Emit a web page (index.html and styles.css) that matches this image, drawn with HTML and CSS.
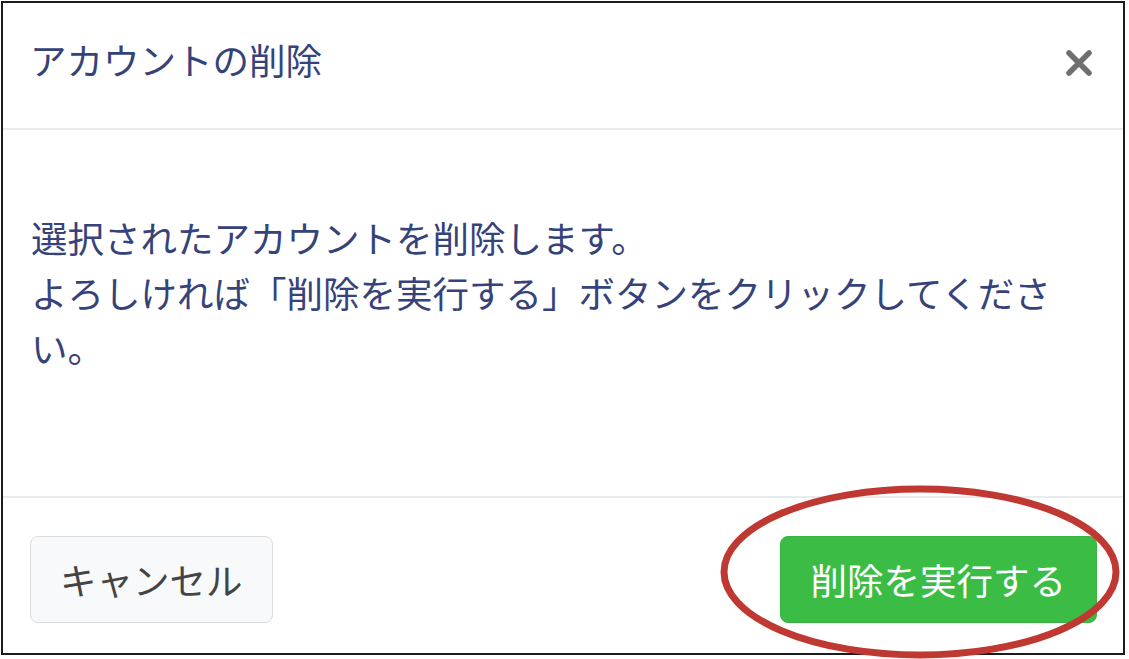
FILE: index.html
```html
<!DOCTYPE html>
<html lang="ja">
<head>
<meta charset="utf-8">
<title>アカウントの削除</title>
<link rel="stylesheet" href="styles.css">
</head>
<body>
<div class="modal">
  <div class="modal-header">
    <h5 class="modal-title">アカウントの削除</h5>
    <button class="close" type="button" aria-label="閉じる">
      <svg viewBox="0 0 26 26" width="26" height="26"><path d="M3 3 L23 23 M23 3 L3 23" stroke="#6f6f6f" stroke-width="5.5" stroke-linecap="round" fill="none"/></svg>
    </button>
  </div>
  <div class="modal-body">
    <p>選択されたアカウントを削除します。<br>よろしければ「削除を実行する」ボタンをクリックしてください。</p>
  </div>
  <div class="modal-footer">
    <button class="btn btn-light" type="button">キャンセル</button>
    <button class="btn btn-success" type="button">削除を実行する</button>
  </div>
</div>
<svg class="mark" viewBox="0 0 410 184" width="410" height="184">
  <ellipse cx="205" cy="92" rx="196" ry="83" fill="none" stroke="#bf3832" stroke-width="7"/>
</svg>
</body>
</html>
```
FILE: styles.css
```css
html, body {
  margin: 0;
  padding: 0;
  background: #ffffff;
  overflow: hidden;
}
body {
  width: 1129px;
  height: 659px;
  position: relative;
  font-family: "Noto Sans CJK JP", "Noto Sans", sans-serif;
}
.modal {
  margin: 1px 0 0 1px;
  width: 1120px;
  height: 650px;
  border: 2px solid #1c1c1c;
  display: flex;
  flex-direction: column;
  background: #fff;
}
.modal-header {
  height: 127px;
  box-sizing: border-box;
  border-bottom: 2px solid #e9ecef;
  display: flex;
  align-items: center;
  justify-content: space-between;
  padding: 0 31px 10px 27px;
}
.modal-title {
  margin: 0;
  font-size: 36.5px;
  line-height: 1.5;
  font-weight: 400;
  color: #36437a;
}
.close {
  border: 0;
  background: none;
  padding: 0;
  margin: 4px 0 0 0;
  width: 26px;
  height: 26px;
  display: block;
}
.close svg { display: block; }
.modal-body {
  padding: 80px 40px 0 28px;
  flex: 1;
  border-bottom: 2px solid #e9ecef;
}
.modal-body p {
  margin: 0;
  font-size: 36.5px;
  line-height: 55px;
  color: #36437a;
}
.modal-footer {
  height: 155px;
  box-sizing: border-box;
  display: flex;
  align-items: center;
  justify-content: space-between;
  padding: 8px 26px 0 27px;
}
.btn {
  font-family: "Noto Sans CJK JP", "Noto Sans", sans-serif;
  font-size: 36.5px;
  line-height: 55px;
  padding: 15px 29px;
  border-radius: 8px;
  margin-top: 0;
}
.btn-light {
  background: #f8f9fa;
  border: 1px solid #dadcde;
  color: #444444;
}
.btn-success {
  background: #3bbd45;
  border: 1px solid #38b442;
  color: #ffffff;
  padding: 15px 30px;
}
.mark {
  position: absolute;
  left: 715px;
  top: 480px;
  pointer-events: none;
}
```
